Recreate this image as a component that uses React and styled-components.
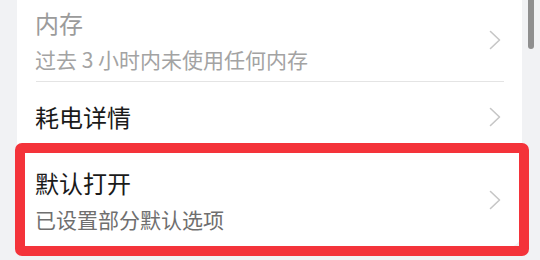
// Imports
import React from 'react';
import styled, { createGlobalStyle } from 'styled-components';

// Global
const GlobalStyle = createGlobalStyle`
	html, body{
		margin: 0;
		padding: 0;
		background-color: #f1f2f4;
		font-family: "Noto Sans CJK SC", "Noto Sans", sans-serif;
	}
	body{
		width: 540px;
		height: 260px;
		overflow: hidden;
	}
`;

// Data
const items = [
	{ id: 'memoire', titre: '内存', sousTitre: '过去 3 小时内未使用任何内存', inactif: true, separateur: true, haut: 7, bas: 8 },
	{ id: 'batterie', titre: '耗电详情', haut: 19, bas: 17 },
	{ id: 'defaut', titre: '默认打开', sousTitre: '已设置部分默认选项', haut: 17, bas: 15 },
];

// Chevron
const Chevron = () => (
	<svg width="12" height="20" viewBox="0 0 12 20" fill="none">
		<path d="M1.5 1.5 L10.5 10 L1.5 18.5" stroke="#c6c6c6" strokeWidth="1.6" strokeLinecap="round" strokeLinejoin="round" />
	</svg>
);

// Composant
const App = () => {
	return(
		<Page>
			<GlobalStyle />

			{/* Carte */}
			<Carte>
				{
					items.map((item) => (
						<React.Fragment key={ item.id }>
							<Ligne $haut={ item.haut } $bas={ item.bas }>
								<Textes>
									<Titre $inactif={ item.inactif }>{ item.titre }</Titre>
									{ item.sousTitre && <SousTitre $inactif={ item.inactif }>{ item.sousTitre }</SousTitre> }
								</Textes>
								<Chevron />
							</Ligne>
							{ item.separateur && <Separateur /> }
						</React.Fragment>
					))
				}
			</Carte>
			{/* Carte */}

			{/* Annotation */}
			<Cadre />
			<Ascenseur />

		</Page>
	);
};

// Styled
const Page = styled.div`
	position: relative;
	width: 540px;
	height: 260px;
	padding: 0 0 0 17px;
	box-sizing: border-box;
`;

const Carte = styled.div`
	width: 505px;
	background-color: #ffffff;
	border-radius: 0 0 16px 16px;
`;

const Ligne = styled.div`
	display: flex;
	flex-direction: row;
	align-items: center;
	justify-content: space-between;
	padding: ${ ({ $haut }) => $haut }px 21px ${ ({ $bas }) => $bas }px 18px;
`;

const Textes = styled.div`
	display: flex;
	flex-direction: column;
	gap: 6px;
`;

const Titre = styled.div`
	font-size: 24px;
	line-height: 32px;
	color: ${ ({ $inactif }) => $inactif ? '#9b9b9b' : '#1a1a1a' };
`;

const SousTitre = styled.div`
	font-size: 21px;
	line-height: 28px;
	color: ${ ({ $inactif }) => $inactif ? '#a3a3a3' : '#6f6f6f' };
`;

const Separateur = styled.div`
	height: 1px;
	margin: 0 18px 0 19px;
	background-color: #e4e4e4;
`;

const Cadre = styled.div`
	position: absolute;
	left: 15px;
	top: 143px;
	width: 514px;
	height: 113px;
	box-sizing: border-box;
	border: 10px solid #f4333a;
	border-radius: 7px;
	pointer-events: none;
`;

const Ascenseur = styled.div`
	position: absolute;
	left: 528px;
	top: -10px;
	width: 6px;
	height: 59px;
	border-radius: 3px;
	background-color: #8f8f8f;
`;

// Export
export default App;
